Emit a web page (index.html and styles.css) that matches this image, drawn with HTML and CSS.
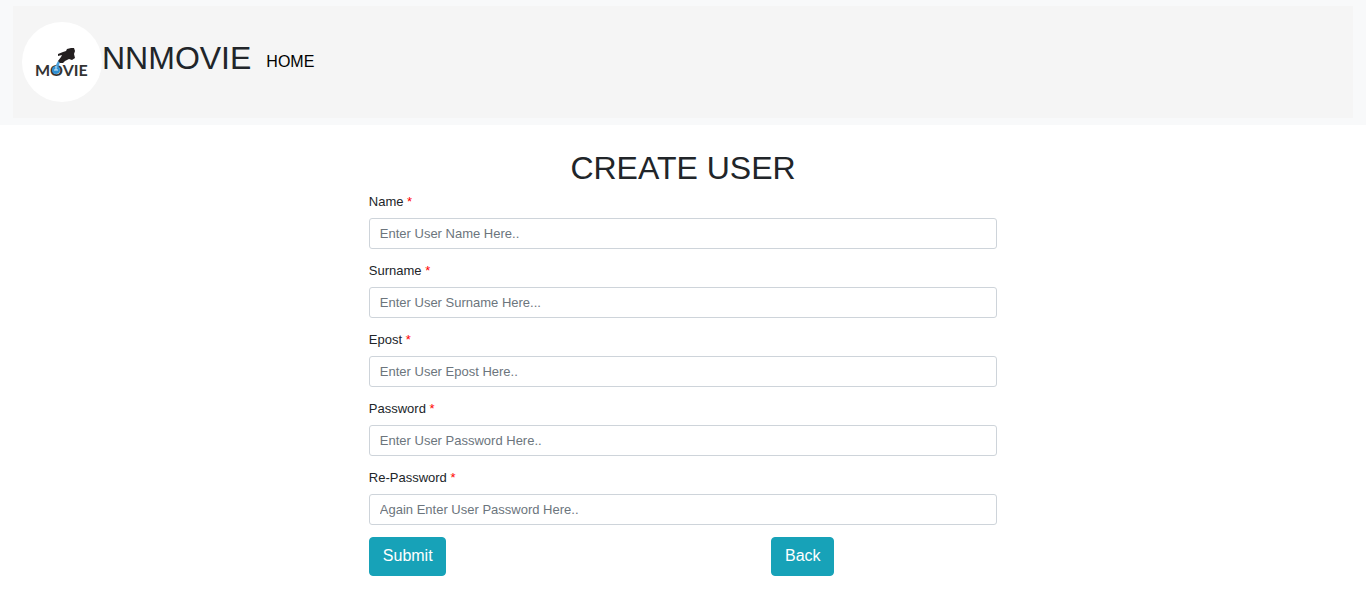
FILE: index.html
```html
<!DOCTYPE html>
<html lang="en">
<head>
<meta charset="utf-8">
<meta name="viewport" content="width=device-width, initial-scale=1">
<title>NNMOVIE - Create User</title>
<link rel="stylesheet" href="styles.css">
</head>
<body>
<header class="site-header">
  <nav class="navbar">
    <svg class="logo" viewBox="0 0 80 80" role="img" aria-label="Movie logo">
      <circle cx="40" cy="40" r="40" fill="#fff"/>
      <text class="logo-text" x="13" y="54">MOVIE</text>
      <circle cx="34" cy="48" r="4" fill="#2f8fd0"/>
      <path d="M33 45l3-6 2 1-2 6z" fill="#4b9fd8"/>
      <path d="M34 48v-4M32 48h4" stroke="#d5ecfa" stroke-width="1"/>
      <path d="M36 39l3-4 1-2-4 1v-2l5-2 3-1 1-2 4-1 3 0 1 3-1 3 1 4-3 2-3-1-4 2-2 2-3 0z" fill="#231f20"/>
    </svg>
    <span class="brand">NNMOVIE</span>
    <a class="nav-link" href="#">HOME</a>
  </nav>
</header>
<main class="content">
  <h1 class="title">CREATE USER</h1>
  <form class="user-form">
    <div class="field">
      <label class="label" for="name">Name <span class="required">*</span></label>
      <input class="input" id="name" type="text" placeholder="Enter User Name Here..">
    </div>
    <div class="field">
      <label class="label" for="surname">Surname <span class="required">*</span></label>
      <input class="input" id="surname" type="text" placeholder="Enter User Surname Here...">
    </div>
    <div class="field">
      <label class="label" for="epost">Epost <span class="required">*</span></label>
      <input class="input" id="epost" type="email" placeholder="Enter User Epost Here..">
    </div>
    <div class="field">
      <label class="label" for="password">Password <span class="required">*</span></label>
      <input class="input" id="password" type="password" placeholder="Enter User Password Here..">
    </div>
    <div class="field">
      <label class="label" for="repassword">Re-Password <span class="required">*</span></label>
      <input class="input" id="repassword" type="password" placeholder="Again Enter User Password Here..">
    </div>
    <div class="actions">
      <div><button class="button" type="submit">Submit</button></div>
      <div><button class="button" type="button">Back</button></div>
    </div>
  </form>
</main>
</body>
</html>
```

FILE: styles.css
```css
* {
  box-sizing: border-box;
}

body {
  margin: 0;
  background: #fff;
  color: #212529;
  font-family: "Liberation Sans", Arial, sans-serif;
  font-size: 16px;
  line-height: 24px;
}

.site-header {
  padding: 6px 13px 7px;
  background: #f8f9fa;
}

.navbar {
  display: flex;
  align-items: flex-start;
  padding: 16px 9px;
  background: #f5f5f5;
}

.logo {
  width: 80px;
  height: 80px;
  flex: none;
}

.logo-text {
  font-family: Lato, sans-serif;
  font-size: 16px;
  font-weight: 700;
  fill: #333;
}

.brand {
  padding-top: 16px;
  font-size: 32px;
  line-height: 40px;
}

.nav-link {
  padding: 28px 15px 0;
  color: #000;
  text-decoration: none;
}

.content {
  width: 46%;
  margin: 0 auto;
  padding: 23px 0 24px;
}

.title {
  margin: 0 0 4px;
  font-size: 32px;
  font-weight: 400;
  line-height: 40px;
  text-align: center;
}

.field {
  margin-bottom: 12px;
}

.label {
  display: block;
  margin-bottom: 6px;
  font-size: 13px;
  line-height: 20px;
}

.required {
  color: #f00;
}

.input {
  display: block;
  width: 100%;
  padding: 4px 10px;
  border: 1px solid #ced4da;
  border-radius: 3px;
  background: #fff;
  color: #495057;
  font: 13px/21px "Liberation Sans", Arial, sans-serif;
}

.input::placeholder {
  color: #6c757d;
  opacity: 1;
}

.actions {
  display: grid;
  grid-template-columns: 64% 36%;
}

.button {
  padding: 6px 12px 7px 13px;
  border: 1px solid #17a2b8;
  border-radius: 4px;
  background: #17a2b8;
  color: #fff;
  font: 16px/24px "Liberation Sans", Arial, sans-serif;
}
```
